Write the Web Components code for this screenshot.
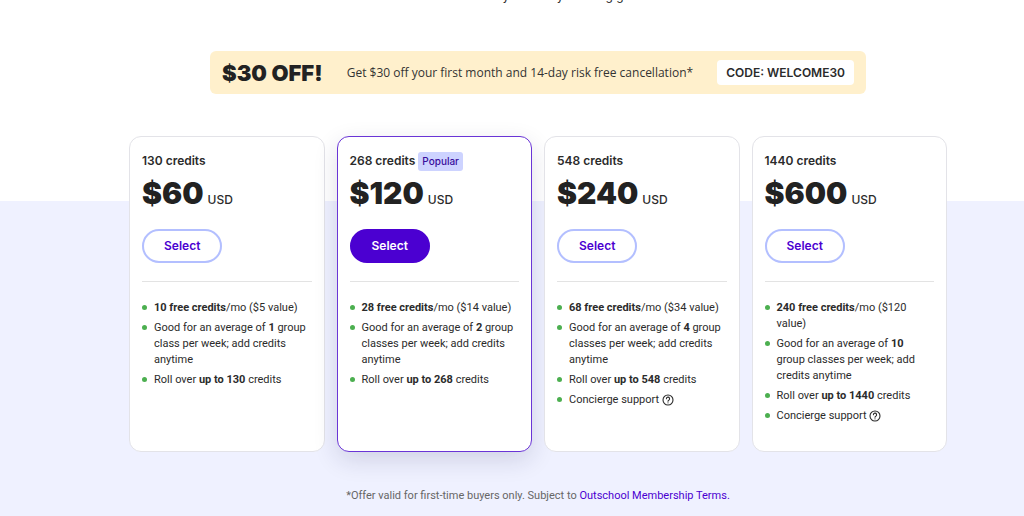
<!DOCTYPE html>
<html lang="en">
<head>
<meta charset="utf-8">
<title>Membership plans</title>
<style>
  body { margin: 0; font-family: "Inter", sans-serif; color: #2b2b2b; }
  a { color: #4b00d1; text-decoration: none; }
</style>
</head>
<body>
<pricing-page>
  <span slot="intro">Get flexibility for every learning goal</span>
  <promo-banner slot="promo" code="WELCOME30">
    <span slot="title">$30 OFF!</span>
    Get $30 off your first month and 14-day risk free cancellation*
  </promo-banner>
  <credit-plan credits="130" price="$60">
    <plan-feature><b>10 free credits</b>/mo ($5 value)</plan-feature>
    <plan-feature>Good for an average of <b>1</b> group class per week; add credits anytime</plan-feature>
    <plan-feature>Roll over <b>up to 130</b> credits</plan-feature>
  </credit-plan>
  <credit-plan credits="268" price="$120" popular>
    <span slot="badge">Popular</span>
    <plan-feature><b>28 free credits</b>/mo ($14 value)</plan-feature>
    <plan-feature>Good for an average of <b>2</b> group classes per week; add credits anytime</plan-feature>
    <plan-feature>Roll over <b>up to 268</b> credits</plan-feature>
  </credit-plan>
  <credit-plan credits="548" price="$240">
    <plan-feature><b>68 free credits</b>/mo ($34 value)</plan-feature>
    <plan-feature>Good for an average of <b>4</b> group classes per week; add credits anytime</plan-feature>
    <plan-feature>Roll over <b>up to 548</b> credits</plan-feature>
    <plan-feature>Concierge support <help-tip></help-tip></plan-feature>
  </credit-plan>
  <credit-plan credits="1440" price="$600">
    <plan-feature><b>240 free credits</b>/mo ($120 value)</plan-feature>
    <plan-feature>Good for an average of <b>10</b> group classes per week; add credits anytime</plan-feature>
    <plan-feature>Roll over <b>up to 1440</b> credits</plan-feature>
    <plan-feature>Concierge support <help-tip></help-tip></plan-feature>
  </credit-plan>
  <span slot="terms">*Offer valid for first-time buyers only. Subject to <a href="#terms">Outschool Membership Terms.</a></span>
</pricing-page>

<script>
const define = (name, html, setup) => customElements.define(name, class extends HTMLElement {
  constructor() {
    super();
    this.attachShadow({ mode: 'open' }).innerHTML = html;
  }
  connectedCallback() { if (setup) setup(this, this.shadowRoot); }
});

define('pricing-page', `
<style>
  :host { display: flow-root; box-sizing: border-box; min-height: 100vh; padding: 0 24px 12px 76px;
    background: linear-gradient(#fff 201px, #eff1ff 201px); }
  main { max-width: 818px; margin: 0 auto; }
  .intro { margin: -12px 0 47px; font-size: 12px; line-height: 16px; text-align: center; }
  .plans { display: grid; grid-template-columns: repeat(auto-fit, minmax(184px, 1fr)); gap: 12px; margin-top: 42px; }
  .terms { margin: 36px 0 0; font-family: Roboto, sans-serif; font-size: 11px; line-height: 16px;
    text-align: center; color: #666; }
  .terms ::slotted(span) { font-weight: 400; }
</style>
<main>
  <p class="intro"><slot name="intro"></slot></p>
  <slot name="promo"></slot>
  <div class="plans"><slot></slot></div>
  <p class="terms"><slot name="terms"></slot></p>
</main>`);

define('promo-banner', `
<style>
  :host { display: flex; align-items: center; justify-content: space-between; box-sizing: border-box;
    max-width: 656px; min-height: 43px; margin: 0 auto; padding: 8px 12px; border-radius: 6px;
    background: #fff0cc; }
  h2 { margin: 0; font-size: 22px; line-height: 24px; font-weight: 900; color: #222; }
  p { margin: 0; font-family: "Open Sans", sans-serif; font-size: 12px; line-height: 16px; color: #333; }
  .code { padding: 0 9px; border-radius: 4px; background: #fff; font-size: 12px; line-height: 25px;
    font-weight: 600; }
</style>
<h2><slot name="title"></slot></h2>
<p><slot></slot></p>
<span class="code"></span>`, (el, root) => {
  root.querySelector('.code').textContent = 'CODE: ' + el.getAttribute('code');
});

define('credit-plan', `
<style>
  :host { display: block; box-sizing: border-box; min-height: 316px; padding: 14px 12px 27px;
    border: 1px solid #e3e3e8; border-radius: 12px; background: #fff; }
  :host([popular]) { border-color: #6a35d6; box-shadow: 0 8px 24px rgba(30, 30, 70, .14); }
  header { display: flex; align-items: center; gap: 3px; min-height: 20px; }
  h3 { margin: 0; font-size: 12px; line-height: 16px; font-weight: 600; }
  ::slotted([slot=badge]) { padding: 0 4px; border-radius: 3px; background: #cdd3ff; color: #380d9c;
    font: 500 10px/19px "Inter", sans-serif; }
  .price { display: flex; align-items: baseline; gap: 4px; margin: 4px 0 18px; line-height: 36px; }
  .price strong { font-size: 30px; font-weight: 900; color: #222; }
  .price span { font-size: 12px; line-height: 16px; font-weight: 500; }
  button { display: block; height: 34px; padding: 0 20px; border: 2px solid #b3bfff; border-radius: 17px;
    background: #fff; color: #4b00d1; font: 600 12px/16px "Inter", sans-serif; }
  :host([popular]) button { border-color: #4b00d1; background: #4b00d1; color: #fff; }
  hr { margin: 18px 0; border: 0; border-top: 1px solid #e3e3e3; }
  .features { display: grid; gap: 4px; }
</style>
<header><h3></h3><slot name="badge"></slot></header>
<div class="price"><strong></strong><span>USD</span></div>
<button type="button">Select</button>
<hr>
<div class="features" role="list"><slot></slot></div>`, (el, root) => {
  root.querySelector('h3').textContent = el.getAttribute('credits') + ' credits';
  root.querySelector('strong').textContent = el.getAttribute('price');
});

define('plan-feature', `
<style>
  :host { display: grid; grid-template-columns: 5px 1fr; gap: 7px; padding-right: 4px;
    font-family: Roboto, sans-serif; font-size: 11px; line-height: 16px; }
  i { width: 5px; height: 5px; margin-top: 5px; border-radius: 50%; background: #4caf50; }
</style>
<i></i><div><slot></slot></div>`, el => el.setAttribute('role', 'listitem'));

define('help-tip', `
<style>
  :host { display: inline-block; height: 12px; vertical-align: middle; }
  button { display: block; padding: 0; border: 0; background: none; color: inherit; }
  svg { display: block; }
</style>
<button type="button" aria-label="About concierge support">
  <svg width="12" height="12" viewBox="0 0 24 24" fill="none" stroke="currentColor" stroke-width="2.2" stroke-linecap="round" stroke-linejoin="round">
    <circle cx="12" cy="12" r="10"/><path d="M8.8 9.5a3.2 3.2 0 1 1 4.7 2.8c-1 .5-1.5 1-1.5 2"/><path d="M12 17.6v.1"/>
  </svg>
</button>`);
</script>
</body>
</html>
